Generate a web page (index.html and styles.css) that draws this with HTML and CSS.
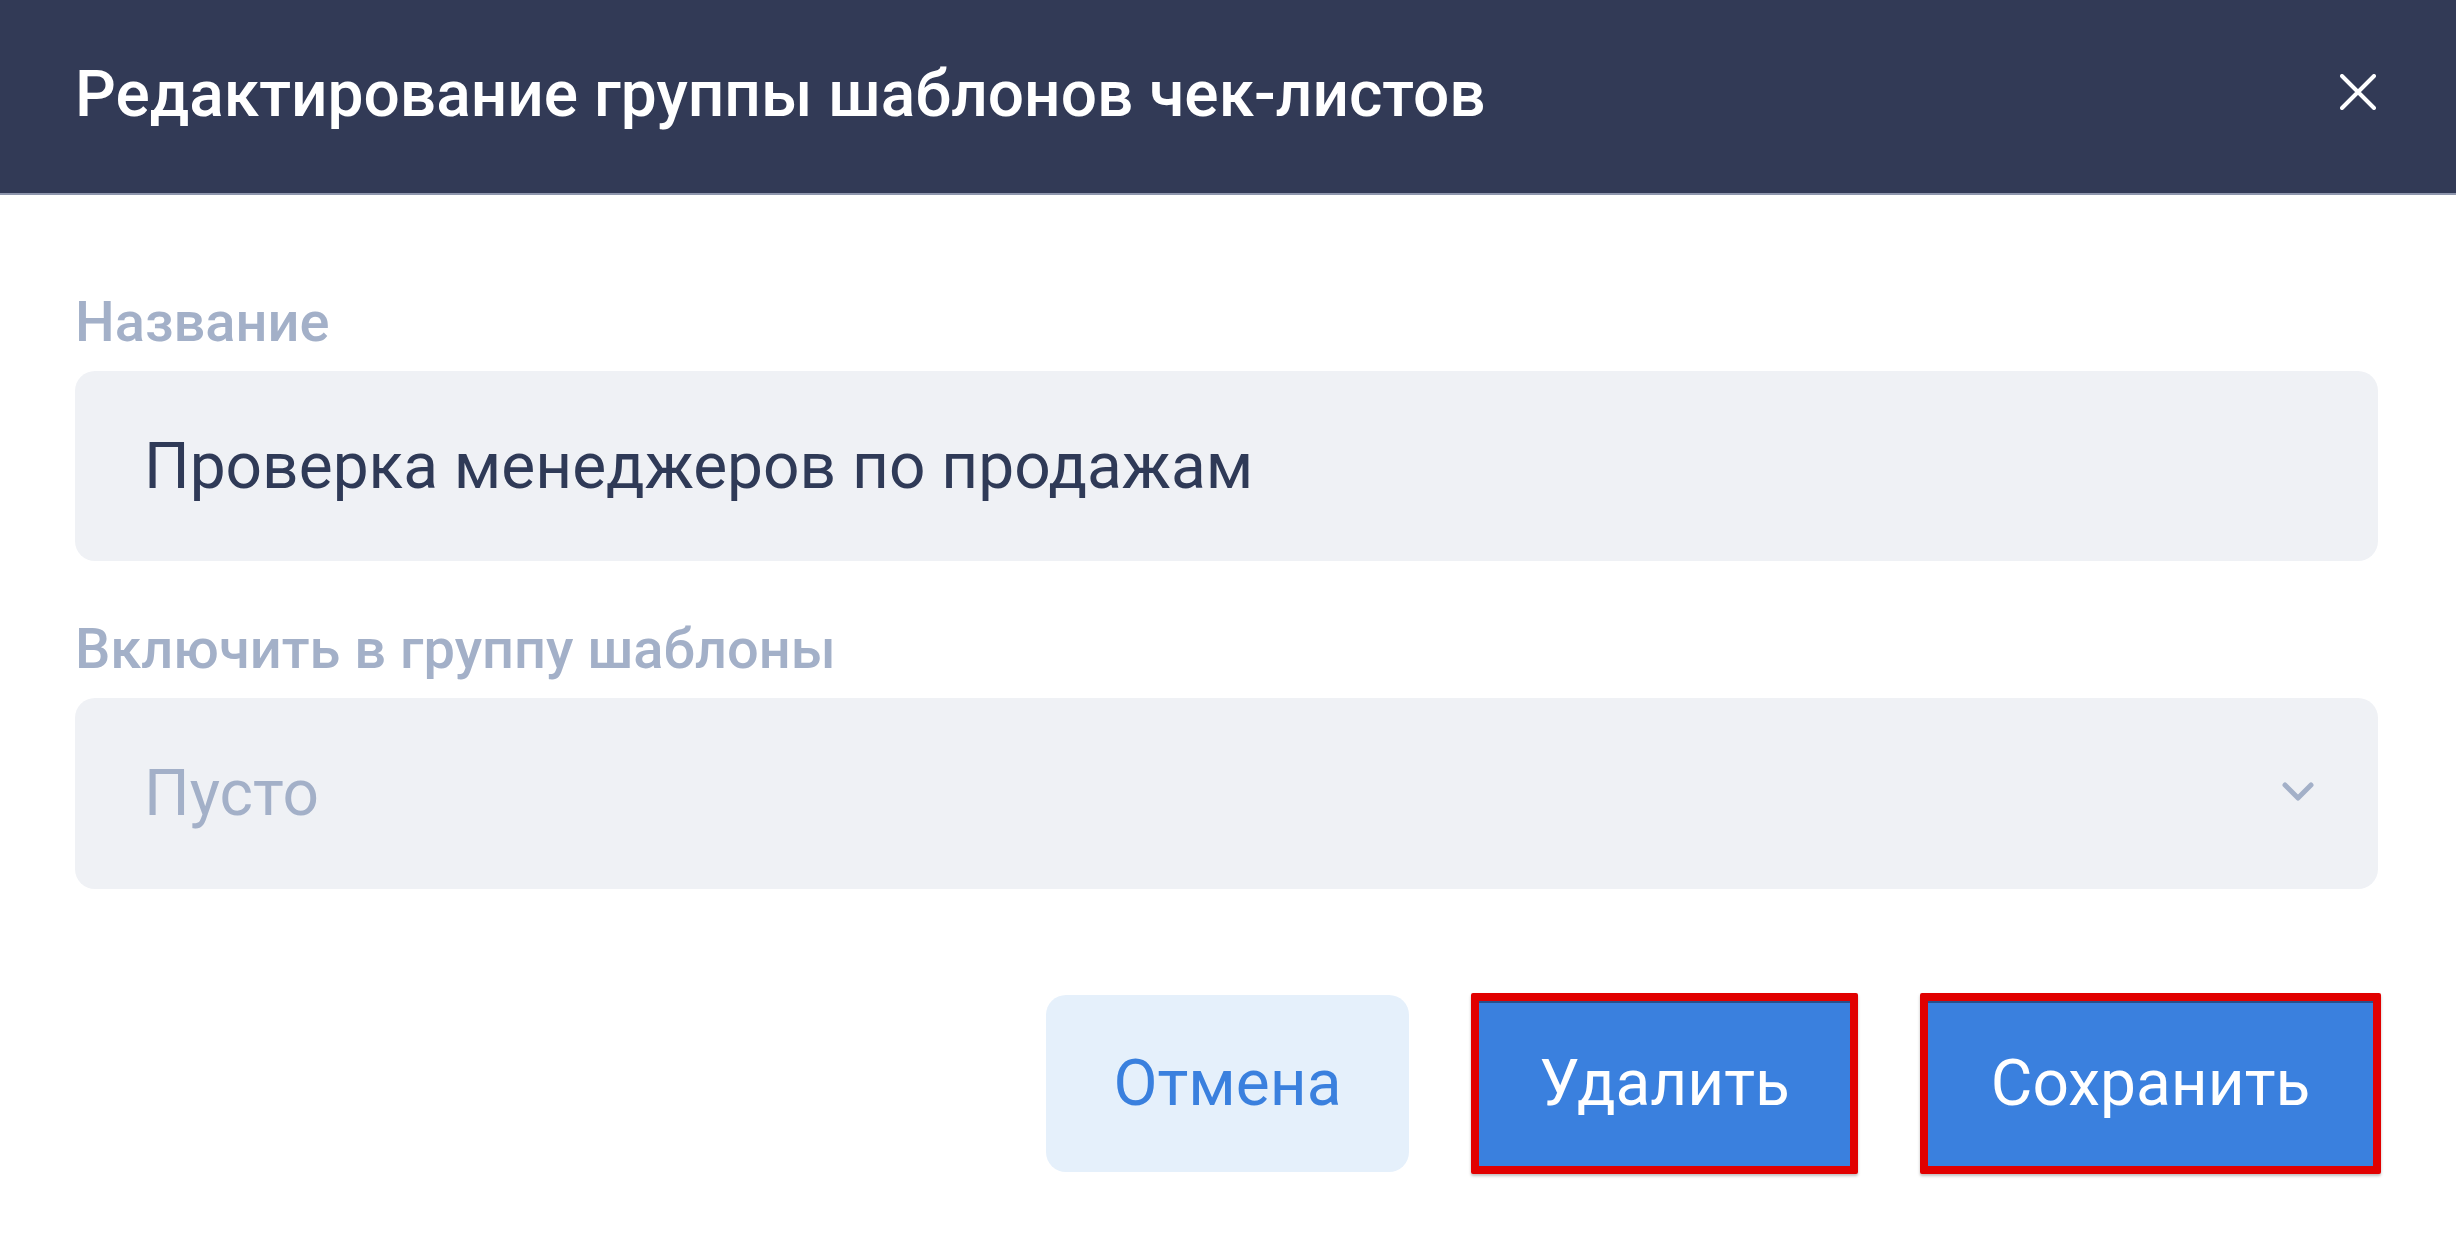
FILE: index.html
```html
<!DOCTYPE html>
<html lang="ru">
<head>
<meta charset="utf-8">
<title>Редактирование группы шаблонов чек-листов</title>
<link rel="stylesheet" href="styles.css">
</head>
<body>
<div class="dialog">
  <header class="dialog-header">
    <h1 class="dialog-title">Редактирование группы шаблонов чек-листов</h1>
    <button class="close-btn" aria-label="Закрыть">
      <svg width="36" height="36" viewBox="0 0 36 36"><path d="M2 2 L34 34 M34 2 L2 34" stroke="#ffffff" stroke-width="4" stroke-linecap="round" fill="none"/></svg>
    </button>
  </header>
  <main class="dialog-body">
    <label class="field-label label-first">Название</label>
    <div class="field">Проверка менеджеров по продажам</div>
    <label class="field-label label-second">Включить в группу шаблоны</label>
    <div class="field select">
      <span class="placeholder">Пусто</span>
      <svg class="chevron" width="32" height="20" viewBox="0 0 32 20"><polyline points="3,3 16,16 29,3" stroke="#a3b0c8" stroke-width="5" stroke-linecap="round" stroke-linejoin="round" fill="none"/></svg>
    </div>
    <div class="actions">
      <button class="btn btn-cancel">Отмена</button>
      <button class="btn btn-primary btn-delete">Удалить</button>
      <button class="btn btn-primary btn-save">Сохранить</button>
    </div>
  </main>
</div>
</body>
</html>
```
FILE: styles.css
```css
html, body {
  margin: 0;
  padding: 0;
  background: #ffffff;
}
body {
  font-family: Roboto, "Noto Sans", "Liberation Sans", sans-serif;
  width: 2456px;
  height: 1234px;
  overflow: hidden;
}
.dialog {
  display: flex;
  flex-direction: column;
}
.dialog-header {
  height: 193px;
  background: #323a56;
  border-bottom: 2px solid #8e96ad;
  display: flex;
  align-items: center;
  justify-content: space-between;
  padding: 0 80px 0 75px;
}
.dialog-title {
  margin: -4px 0 0 0;
  color: #ffffff;
  font-size: 64px;
  font-weight: 500;
  line-height: 1;
}
.close-btn {
  background: none;
  border: 0;
  padding: 0;
  width: 36px;
  height: 36px;
  display: flex;
  margin-top: -10px;
}
.dialog-body {
  display: flex;
  flex-direction: column;
  padding: 0 78px 0 75px;
}
.field-label {
  display: block;
  color: #a3b0c8;
  font-size: 56px;
  font-weight: 500;
  line-height: 66px;
  margin-bottom: 16px;
}
.label-first { margin-top: 94px; }
.label-second { margin-top: 55px; }
.field {
  height: 190px;
  background: #eff1f5;
  border-radius: 20px;
  display: flex;
  align-items: center;
  padding: 0 64px 0 69px;
  font-size: 64px;
  color: #2f3a57;
  box-sizing: border-box;
}
.select {
  justify-content: space-between;
  height: 191px;
}
.placeholder {
  color: #a3b0c8;
}
.chevron {
  margin-top: -4px;
}
.actions {
  display: flex;
  justify-content: flex-end;
  align-items: center;
  gap: 62px;
  margin-top: 104px;
  margin-right: -3px;
}
.btn {
  font-family: Roboto, "Noto Sans", "Liberation Sans", sans-serif;
  font-size: 64px;
  font-weight: 400;
  box-sizing: border-box;
  display: flex;
  align-items: center;
  justify-content: center;
  padding: 0;
  cursor: pointer;
}
.btn-cancel {
  width: 363px;
  height: 177px;
  background: #e5f0fb;
  color: #3a80de;
  border: 0;
  border-radius: 20px;
}
.btn-primary {
  height: 181px;
  background: #3a80de;
  color: #ffffff;
  border: 8px solid #e10000;
  border-radius: 2px;
  box-shadow: inset 0 2px 0 #2a4f8a, 0 2px 3px rgba(0, 0, 0, 0.25);
}
.btn-delete { width: 387px; }
.btn-save { width: 461px; }
```
